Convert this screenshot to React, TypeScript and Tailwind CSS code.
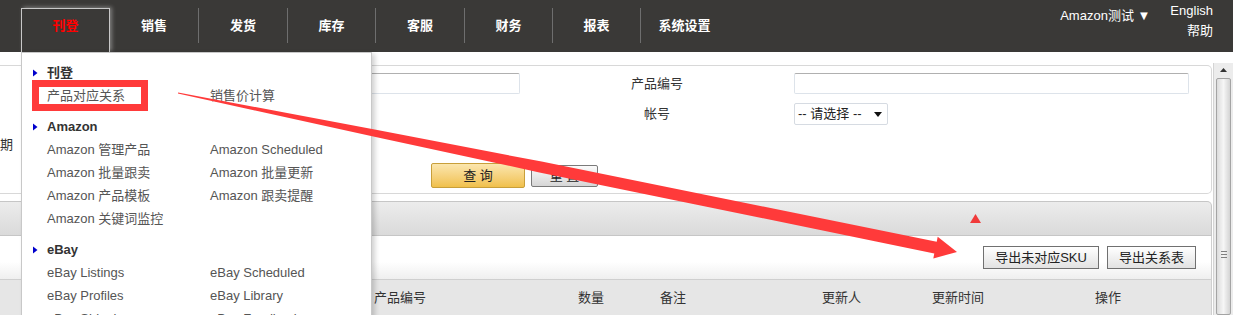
import React from "react";

const navs = [
  { t: "刊登", w: "w-[89px]", active: true, sep: false },
  { t: "销售", w: "w-[88px]", sep: false },
  { t: "发货", w: "w-[89px]", sep: true },
  { t: "库存", w: "w-[88px]", sep: true },
  { t: "客服", w: "w-[89px]", sep: true },
  { t: "财务", w: "w-[88px]", sep: true },
  { t: "报表", w: "w-[88px]", sep: true },
  { t: "系统设置", w: "w-[88px]", sep: true },
];

function Tri() {
  return (
    <svg width="5" height="8" viewBox="0 0 5 8" className="block">
      <polygon points="0,0.5 4.5,4 0,7.5" fill="#0000cc" />
    </svg>
  );
}

function Section({ title, items, className = "" }: { title: string; items: string[]; className?: string }) {
  return (
    <div className={className}>
      <div className="flex items-center h-[23px] pl-[11px]">
        <span className="w-[14px] flex items-center">
          <Tri />
        </span>
        <span className="font-bold text-[#333] text-[13px]">{title}</span>
      </div>
      <div className="grid grid-cols-[163px_auto] pl-[25px]">
        {items.map((it, i) => (
          <div key={i} className="h-[23px] flex items-center text-[13px] text-[#555] whitespace-nowrap">
            {it}
          </div>
        ))}
      </div>
    </div>
  );
}

export default function App() {
  return (
    <div className="relative w-[1233px] h-[315px] overflow-hidden bg-white font-[Liberation_Sans,Noto_Sans_CJK_SC,sans-serif] text-[13px]">
      {/* top nav */}
      <div className="flex h-[52px] bg-[#3a3937]">
        <div className="flex pl-[21px] pt-[8px]">
          {navs.map((n, i) =>
            n.active ? (
              <div
                key={i}
                className={`${n.w} h-[44px] border border-b-0 border-[#c8c8c8] shadow-[2px_-1px_4px_rgba(255,255,255,0.35)] flex justify-center`}
              >
                <div className="h-[34px] flex items-center text-[#ff0000] font-bold">{n.t}</div>
              </div>
            ) : (
              <div key={i} className={`${n.w} h-[44px] flex items-start`}>
                {n.sep ? <div className="w-px h-[35px] bg-[#6e6e6e]" /> : null}
                <div className="flex-1 h-[35px] flex items-center justify-center text-white font-bold">{n.t}</div>
              </div>
            )
          )}
        </div>
        <div className="ml-auto flex items-start gap-[20px] pr-[20px] text-white">
          <div className="mt-[8px] leading-[16px]">Amazon测试 ▼</div>
          <div className="pt-[1px] flex flex-col items-end leading-[20px]">
            <div>English</div>
            <div>帮助</div>
          </div>
        </div>
      </div>

      {/* main */}
      <div className="flex">
        <div className="w-[1213px] pt-[13px]">
          {/* search panel */}
          <div className="w-[1212px] h-[129px] border-t border-r border-b border-[#d8d8d8] rounded-r-[5px] pt-[7px]">
            <div className="flex items-center h-[21px]">
              <div className="w-[520px] flex justify-end">
                <div className="w-[320px] h-[21px] border border-[#dde3ea] border-t-[#b0b0b0] rounded-[2px] bg-white" />
              </div>
              <div className="w-[274px] text-center text-[#333]">产品编号</div>
              <div className="w-[395px] h-[21px] border border-[#dde3ea] border-t-[#b0b0b0] rounded-[2px] bg-white" />
            </div>
            <div className="flex items-center h-[22px] mt-[9px]">
              <div className="w-[520px]" />
              <div className="w-[274px] text-center text-[#333]">帐号</div>
              <div className="w-[94px] h-[22px] border border-[#d6dbe2] rounded-[2px] bg-white flex items-center pl-[3px] pr-[5px] text-[#222]">
                <span>-- 请选择 --</span>
                <svg width="8" height="5" viewBox="0 0 8 5" className="ml-auto">
                  <polygon points="0,0 8,0 4,5" fill="#111" />
                </svg>
              </div>
            </div>
            <div className="mt-[10px] h-[20px] leading-[20px] text-[#333]">期</div>
            <div className="mt-[8px] h-[25px] flex items-start pl-[431px] gap-[6px]">
              <div className="w-[94px] h-[25px] rounded-[2px] border border-[#c89f3a] bg-gradient-to-b from-[#fbe6ad] to-[#f0c04a] flex items-center justify-center text-[#222]">
                查 询
              </div>
              <div className="mt-[2px] w-[67px] h-[22px] rounded-[2px] border border-[#7a7a7a] bg-gradient-to-b from-[#fbfbfb] to-[#d6d6d6] flex items-center justify-center text-[#222]">
                重 置
              </div>
            </div>
          </div>

          {/* section bar */}
          <div className="mt-[7px] w-[1212px] h-[35px] border-t border-r border-b border-[#c6c6c6] rounded-tr-[5px] bg-gradient-to-b from-[#ececec] to-[#dadada] flex items-center pl-[970px]">
            <svg width="11" height="9" viewBox="0 0 11 9">
              <polygon points="5.5,0 11,9 0,9" fill="#f03a3a" />
            </svg>
          </div>

          {/* toolbar */}
          <div className="w-[1212px] h-[43px] border-r border-[#cfcfcf] bg-gradient-to-b from-white from-60% to-[#efefef] flex items-center justify-end gap-[8px] pr-[15px]">
            <div className="w-[116px] h-[23px] border border-[#707070] bg-gradient-to-b from-white to-[#e2e2e2] flex items-center justify-center text-[#222]">
              导出未对应SKU
            </div>
            <div className="w-[89px] h-[23px] border border-[#707070] bg-gradient-to-b from-white to-[#e2e2e2] flex items-center justify-center text-[#222]">
              导出关系表
            </div>
          </div>

          {/* table header */}
          <div className="w-[1212px] h-[40px] border-t border-r border-[#cfcfcf] bg-[#e6e6e6] flex items-start text-[#333]">
            <div className="h-[36px] flex items-center">
              <div className="w-[374px]" />
              <div className="w-[204px]">产品编号</div>
              <div className="w-[82px]">数量</div>
              <div className="w-[162px]">备注</div>
              <div className="w-[110px]">更新人</div>
              <div className="w-[163px]">更新时间</div>
              <div>操作</div>
            </div>
          </div>
        </div>

        {/* scrollbar */}
        <div className="mt-[11px] w-[20px] h-[252px] bg-[#ececec] border-l border-[#d4d4d4] flex flex-col items-center">
          <div className="h-[19px] w-full flex items-center justify-center">
            <svg width="7" height="4" viewBox="0 0 7 4">
              <polygon points="3.5,0 7,4 0,4" fill="#333" />
            </svg>
          </div>
          <div className="mt-[1px] w-[15px] h-[260px] rounded-[2px] border border-[#a4a4a4] bg-gradient-to-r from-[#dcdcdc] via-[#f6f6f6] to-[#d4d4d4] flex flex-col items-center pt-[172px] gap-[2px]">
            <div className="w-[6px] h-px bg-[#808080]" />
            <div className="w-[6px] h-px bg-[#808080]" />
            <div className="w-[6px] h-px bg-[#808080]" />
          </div>
        </div>
      </div>

      {/* dropdown menu */}
      <div className="absolute left-[21px] top-[52px] w-[351px] h-[290px] border border-[#c8c8c8] bg-white shadow-[3px_2px_5px_rgba(0,0,0,0.18)] pt-[8px]">
        <Section title="刊登" items={["产品对应关系", "销售价计算"]} />
        <Section
          className="mt-[8px]"
          title="Amazon"
          items={[
            "Amazon 管理产品",
            "Amazon Scheduled",
            "Amazon 批量跟卖",
            "Amazon 批量更新",
            "Amazon 产品模板",
            "Amazon 跟卖提醒",
            "Amazon 关键词监控",
          ]}
        />
        <Section
          className="mt-[8px]"
          title="eBay"
          items={["eBay Listings", "eBay Scheduled", "eBay Profiles", "eBay Library", "eBay Shipping", "eBay Feedback"]}
        />
      </div>

      {/* annotations */}
      <div className="absolute left-[32px] top-[80px] w-[116px] h-[31px] border-[7px] border-[#ff3a3a]" />
      <svg className="absolute left-0 top-0 pointer-events-none" width="1233" height="315" viewBox="0 0 1233 315">
        <polygon
          fill="#ff3a3a"
          points="178.1,92.5 374.7,129.6 541.6,161.6 936.7,241.7 937.7,236.8 957,252 933.3,258.4 934.3,253.5 539.4,172.4 373.3,136.4 177.9,93.5"
        />
      </svg>
    </div>
  );
}
